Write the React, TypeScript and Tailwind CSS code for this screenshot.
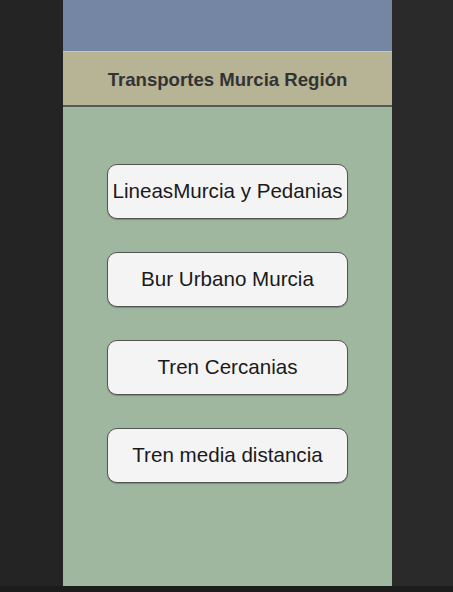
const opciones = [
  'LineasMurcia y Pedanias',
  'Bur Urbano Murcia',
  'Tren Cercanias',
  'Tren media distancia',
]

export default function App() {
  return (
    <div className="w-[453px] h-[592px] bg-[#262626] flex flex-col font-['Liberation_Sans',Arial,sans-serif]">
      <div className="flex flex-1">
        <div className="w-[63px] bg-[#242424]" />
        <div className="w-[329px] flex flex-col">
          <div className="h-[52px] bg-[#7486a3] border-b border-[#c9c9b0]" />
          <div className="h-[55px] bg-[#b6b495] border-b-2 border-[#555a52] flex items-center justify-center pt-[3px]">
            <h1 className="text-[18.6px] font-bold text-[#333]">Transportes Murcia Región</h1>
          </div>
          <div className="flex-1 bg-[#9fb79e] flex flex-col items-center pt-[57px] gap-[33px]">
            {opciones.map((texto) => (
              <button
                key={texto}
                className="w-[241px] h-[55px] rounded-[10px] border border-[#555] bg-[#f4f4f4] text-[20.6px] text-[#1a1a1a] shadow-[0_1px_1px_rgba(0,0,0,0.25)]"
              >
                {texto}
              </button>
            ))}
          </div>
        </div>
        <div className="flex-1 bg-[#2a2a2a]" />
      </div>
      <div className="h-[6px] bg-[#1c1c1c]" />
    </div>
  )
}
